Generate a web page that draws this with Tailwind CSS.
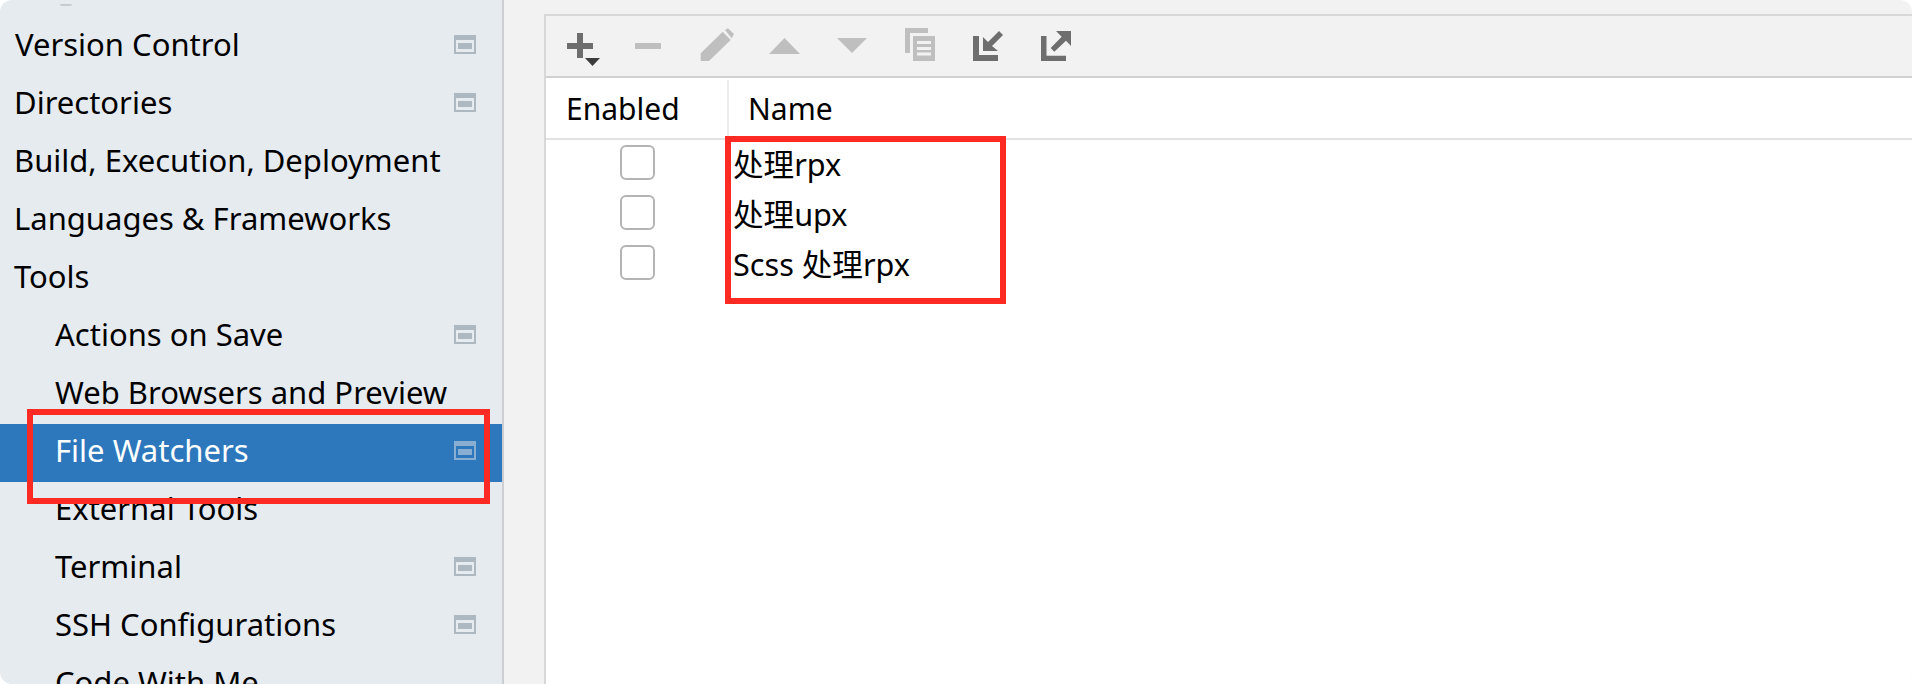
<!DOCTYPE html>
<html lang="en">
<head>
<meta charset="UTF-8">
<title>File Watchers</title>
<script src="https://cdn.jsdelivr.net/npm/@tailwindcss/browser@4"></script>
</head>
<body class="bg-white">
<div class="relative flex w-[1912px] h-[684px] overflow-hidden rounded-[12px] font-['Noto_Sans','Noto_Sans_CJK_SC',sans-serif] text-[30px] text-black">

    <!-- Sidebar -->
    <aside class="relative w-[502px] shrink-0 pt-[18px] bg-[#e6ebf0] text-[31px]">
        <div class="absolute left-[60px] top-[4px] w-[12px] h-[2px] rounded-b-full bg-[#c5cdd3]"></div>
        <div class="flex items-center justify-between h-[58px] pb-[6px] pl-[15px] pr-[26px]">
            <span>Version Control</span>
            <svg width="22" height="19" viewBox="0 0 22 19"><path d="M0 0H22V19H0ZM2 5V17H20V5Z" fill="#adb8c1" fill-rule="evenodd"/><rect x="4" y="8" width="14" height="6" fill="#adb8c1"/></svg>
        </div>
        <div class="flex items-center justify-between h-[58px] pb-[6px] pl-[14px] pr-[26px]">
            <span>Directories</span>
            <svg width="22" height="19" viewBox="0 0 22 19"><path d="M0 0H22V19H0ZM2 5V17H20V5Z" fill="#adb8c1" fill-rule="evenodd"/><rect x="4" y="8" width="14" height="6" fill="#adb8c1"/></svg>
        </div>
        <div class="flex items-center h-[58px] pb-[6px] pl-[14px]">Build, Execution, Deployment</div>
        <div class="flex items-center h-[58px] pb-[6px] pl-[14px]">Languages &amp; Frameworks</div>
        <div class="flex items-center h-[58px] pb-[6px] pl-[14px]">Tools</div>
        <div class="flex items-center justify-between h-[58px] pb-[6px] pl-[55px] pr-[26px]">
            <span>Actions on Save</span>
            <svg width="22" height="19" viewBox="0 0 22 19"><path d="M0 0H22V19H0ZM2 5V17H20V5Z" fill="#adb8c1" fill-rule="evenodd"/><rect x="4" y="8" width="14" height="6" fill="#adb8c1"/></svg>
        </div>
        <div class="flex items-center h-[58px] pb-[6px] pl-[55px]">Web Browsers and Preview</div>
        <div class="flex items-center justify-between h-[58px] pb-[6px] pl-[55px] pr-[26px] bg-[#2d78bd] text-white">
            <span>File Watchers</span>
            <svg width="22" height="19" viewBox="0 0 22 19"><path d="M0 0H22V19H0ZM2 5V17H20V5Z" fill="#89aed2" fill-rule="evenodd"/><rect x="4" y="8" width="14" height="6" fill="#89aed2"/></svg>
        </div>
        <div class="flex items-center h-[58px] pb-[6px] pl-[55px]">External Tools</div>
        <div class="flex items-center justify-between h-[58px] pb-[6px] pl-[55px] pr-[26px]">
            <span>Terminal</span>
            <svg width="22" height="19" viewBox="0 0 22 19"><path d="M0 0H22V19H0ZM2 5V17H20V5Z" fill="#adb8c1" fill-rule="evenodd"/><rect x="4" y="8" width="14" height="6" fill="#adb8c1"/></svg>
        </div>
        <div class="flex items-center justify-between h-[58px] pb-[6px] pl-[55px] pr-[26px]">
            <span>SSH Configurations</span>
            <svg width="22" height="19" viewBox="0 0 22 19"><path d="M0 0H22V19H0ZM2 5V17H20V5Z" fill="#adb8c1" fill-rule="evenodd"/><rect x="4" y="8" width="14" height="6" fill="#adb8c1"/></svg>
        </div>
        <div class="flex items-center h-[58px] pb-[6px] pl-[55px]">Code With Me</div>
    </aside>

    <!-- Main panel -->
    <main class="flex-1 border-l-2 border-[#cbcfd3] bg-[#f2f2f2] pt-[14px] pl-[40px]">
        <div class="h-full border-l-2 border-t-2 border-[#d8d8d8] bg-white">

            <!-- Toolbar -->
            <div class="flex h-[62px] border-b-2 border-[#d1d1d1] bg-[#f2f2f2]">
                <svg width="68" height="60" viewBox="0 0 68 60"><rect x="21" y="27" width="26" height="6" fill="#6e6e6e"/><rect x="31" y="17" width="6" height="25" fill="#6e6e6e"/><path d="M39 42h15l-7.500 8z" fill="#3c3c3c"/></svg>
                <svg width="68" height="60" viewBox="0 0 68 60"><rect x="21" y="27" width="26" height="6" fill="#bfbfbf"/></svg>
                <svg width="68" height="60" viewBox="0 0 68 60"><path d="M18.700 37.300L40.700 15.700L48.700 24L27 45H18.700z" fill="#bfbfbf"/><path d="M43 14L46 12.300L52 18L49.700 22.300z" fill="#bfbfbf"/></svg>
                <svg width="68" height="60" viewBox="0 0 68 60"><path d="M19 38L34.500 22L50 38z" fill="#bfbfbf"/></svg>
                <svg width="68" height="60" viewBox="0 0 68 60"><path d="M19 22H49L34 37z" fill="#bfbfbf"/></svg>
                <svg width="68" height="60" viewBox="0 0 68 60"><path d="M19 12H42V17H24V37H19z" fill="#bfbfbf"/><path d="M27 20H49V45H27zM31 25V28H45V25zM31 31V34H45V31zM31 36.500V39.500H45V36.500z" fill="#bfbfbf" fill-rule="evenodd"/></svg>
                <svg width="68" height="60" viewBox="0 0 68 60"><path d="M19 20H25V39H44V45H19zM29 35V21L34 26L45 15L49 19L38 30L44 35z" fill="#6e6e6e"/></svg>
                <svg width="68" height="60" viewBox="0 0 68 60"><path d="M19 20H24.500V39.700H44V45H19zM34 15H49V30L44 24.700L32.300 35.700L28.700 32L39.700 20.700z" fill="#6e6e6e"/></svg>
            </div>

            <!-- Table header -->
            <div class="flex h-[62px] border-b-2 border-[#e2e2e2]">
                <div class="w-[183px] mt-[2px] pl-[20px] pb-[2px] flex items-center border-r-2 border-[#ececec]">Enabled</div>
                <div class="mt-[2px] pl-[19px] pb-[2px] flex items-center">Name</div>
            </div>

            <!-- Rows -->
            <div class="flex items-center h-[50px]">
                <div class="w-[182px] pl-[74px] mb-[5px]"><span class="block w-[35px] h-[35px] rounded-[6px] border-2 border-[#b4b4b4] bg-white"></span></div>
                <span class="ml-[5px] text-[30.6px]">处理rpx</span>
            </div>
            <div class="flex items-center h-[50px]">
                <div class="w-[182px] pl-[74px] mb-[5px]"><span class="block w-[35px] h-[35px] rounded-[6px] border-2 border-[#b4b4b4] bg-white"></span></div>
                <span class="ml-[5px] text-[30.6px]">处理upx</span>
            </div>
            <div class="flex items-center h-[50px]">
                <div class="w-[182px] pl-[74px] mb-[5px]"><span class="block w-[35px] h-[35px] rounded-[6px] border-2 border-[#b4b4b4] bg-white"></span></div>
                <span class="ml-[5px] text-[30.6px]">Scss 处理rpx</span>
            </div>
        </div>
    </main>

    <!-- Red annotation boxes -->
    <div class="absolute left-[27px] top-[409px] w-[463px] h-[95px] border-[6px] border-[#fc2a22]"></div>
    <div class="absolute left-[725px] top-[136px] w-[281px] h-[168px] border-[6px] border-[#fc2a22]"></div>
</div>
</body>
</html>
